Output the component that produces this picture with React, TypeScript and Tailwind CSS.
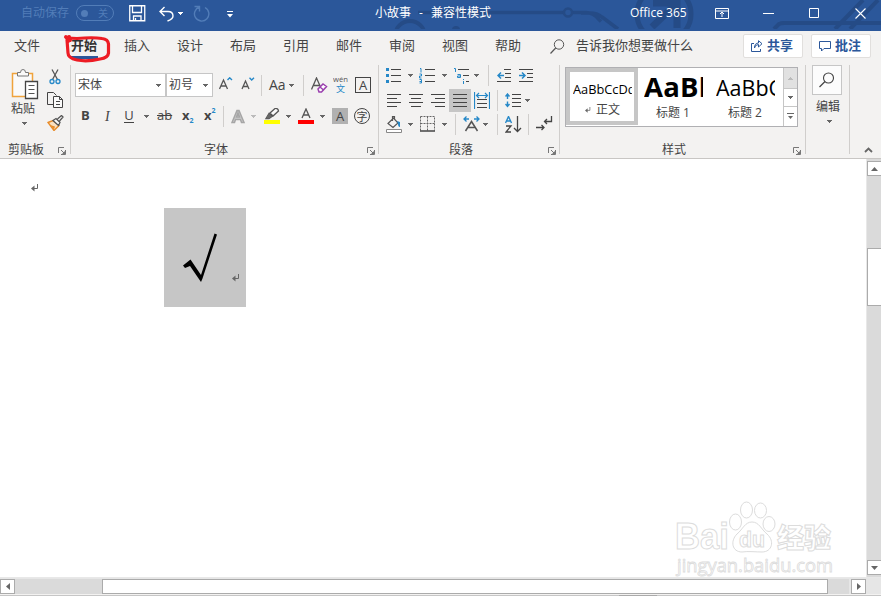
import React from "react";

type IconProps = { w: number; h: number; className?: string; children: React.ReactNode };

function Icon({ w, h, className = "", children }: IconProps) {
  return (
    <svg width={w} height={h} viewBox={`0 0 ${w} ${h}`} fill="none" className={`block shrink-0 ${className}`}>
      {children}
    </svg>
  );
}

function Caret({ className = "", color = "#666" }: { className?: string; color?: string }) {
  return (
    <Icon w={5} h={3} className={className}>
      <path d="M0 0h5v1H4v1H3v1H2V2H1V1H0z" fill={color} />
    </Icon>
  );
}

function Sep({ className = "" }: { className?: string }) {
  return <div className={`h-[21px] w-px shrink-0 bg-[#d0cecc] ${className}`} />;
}

function GroupSep() {
  return <div className="mt-px h-[89px] w-px shrink-0 bg-[#d0cecc]" />;
}

function Launcher({ className = "" }: { className?: string }) {
  return (
    <Icon w={8} h={8} className={className}>
      <path d="M.5 6V.5H6M3 3l3.500 3.500M7.500 3v4.500H3" stroke="#777" />
      <path d="M7 4v3H4z" fill="#777" />
    </Icon>
  );
}

function Lines({ rows, className = "" }: { rows: number[][]; className?: string }) {
  return (
    <Icon w={15} h={14} className={className}>
      {rows.map(([y, x, w]) => (
        <path key={y} d={`M${x} ${y + 0.5}h${w}`} stroke="#444" />
      ))}
    </Icon>
  );
}

function ReturnMark({ className = "" }: { className?: string }) {
  return (
    <Icon w={8} h={8} className={className}>
      <path d="M6.500 0v4.500H2" stroke="#666" />
      <path d="M0 4.500L3.500 1.500v6z" fill="#666" />
    </Icon>
  );
}

function TitleBar() {
  return (
    <header className="relative h-[31px] shrink-0 bg-[#2b579a] text-white">
      <svg className="absolute inset-0" width="881" height="31" fill="none" stroke="#254b86">
        <path d="M418 12.500h145M573 12.500h13q7 0 13 7l2 2M581 13h9q7 0 12 4l16 12" strokeWidth="3.500" />
        <circle cx="568" cy="12.500" r="4" strokeWidth="2.500" />
        <circle cx="410" cy="36" r="15" strokeWidth="4" />
        <circle cx="456" cy="30" r="4" fill="#254b86" stroke="none" />
        <circle cx="664" cy="14" r="27" strokeWidth="5" />
        <path d="M652 27l24-23M653 3h24v25" strokeWidth="7" />
        <path d="M774 29l5-5q2-1 5-1h97M835 29l28-29M850 29l28-29" strokeWidth="4" />
        <path d="M0 30h881" stroke="#2b579a" strokeWidth="2" />
      </svg>
      <div className="relative flex h-[26px] items-center">
        <span className="ml-[21px] w-12 shrink-0 text-[12px] whitespace-nowrap text-[#527db8]">自动保存</span>
        <div className="ml-[7px] flex h-4 w-[38px] shrink-0 items-center rounded-full border border-[#527db8] text-[#527db8]">
          <span className="ml-1 size-[7px] rounded-full bg-[#527db8]" />
          <span className="ml-[10px] text-[10px] leading-none">关</span>
        </div>
        <Icon w={17} h={17} className="ml-[15px]">
          <path d="M.75.75h15v15H.75zM3.500 1v6.500h9V1M4.500 16v-5h7.500v5M6.500 13v3" stroke="white" strokeWidth="1.300" />
        </Icon>
        <Icon w={16} h={16} className="ml-[13px] translate-y-px">
          <path d="M5.500 1L1 5.500 5.500 10M1.500 5.500H9q5 0 5 4.500 0 3-5.500 5" stroke="white" strokeWidth="1.400" />
        </Icon>
        <Caret className="ml-[3px]" color="white" />
        <Icon w={17} h={17} className="ml-[10px]">
          <path d="M1.500 1.500h5v5M6.500 2A7.200 7.200 0 1 0 12 2.500" stroke="#527db8" strokeWidth="1.400" />
        </Icon>
        <Icon w={6} h={7} className="ml-[17px] translate-y-px">
          <path d="M0 .5h6" stroke="white" />
          <path d="M0 3h6L3 6.500z" fill="white" />
        </Icon>
        <span className="ml-[142px] w-[130px] shrink-0 text-[12px] whitespace-nowrap">
          小故事<span className="mx-2">-</span>兼容性模式
        </span>
        <span className="ml-[125px] w-[62px] shrink-0 text-[12px] whitespace-nowrap">Office 365</span>
        <Icon w={14} h={11} className="ml-[23px]">
          <path d="M.5.500h13v10H.5zM.5 3h13M7 9V4M5 6l2-2 2 2" stroke="white" />
        </Icon>
        <Icon w={11} h={11} className="ml-[34px]">
          <path d="M0 5.500h11" stroke="white" />
        </Icon>
        <Icon w={10} h={10} className="ml-[35px]">
          <path d="M.5.500h9v9h-9z" stroke="white" />
        </Icon>
        <Icon w={11} h={11} className="ml-[36px]">
          <path d="M.5.500l10 10M10.500.500l-10 10" stroke="white" strokeWidth="1.100" />
        </Icon>
      </div>
    </header>
  );
}

const TABS = ["插入", "设计", "布局", "引用", "邮件", "审阅", "视图", "帮助"];

function TabBar() {
  return (
    <nav className="flex h-[33px] shrink-0 items-center text-[13px] leading-[18px] whitespace-nowrap text-[#444]">
      <span className="ml-[14px] w-[26px] -translate-y-[3px]">文件</span>
      <div className="relative ml-[31px] w-[26px] text-center font-bold">
        <span className="block -translate-y-[3px] text-[#333]">开始</span>
        <div className="absolute top-[17px] left-0 h-[3px] w-[27px] bg-[#2b579a]" />
        <svg className="absolute -top-[6px] -left-[8px] z-10" width="50" height="32" fill="none" stroke="#ed1c24" strokeLinecap="round" strokeLinejoin="round">
          <path d="M4 5L14 5.500Q30 4 39 5.500Q45 6 45.500 11V20Q45 25 37 26Q24 29 14 27Q5 25 5 20L4 7" strokeWidth="3.200" />
          <path d="M3 4l4 3M5 8l1-4" strokeWidth="4" />
        </svg>
      </div>
      <div className="ml-[27px] flex -translate-y-[3px] gap-[27px]">
        {TABS.map((t) => (
          <span key={t} className="w-[26px]">{t}</span>
        ))}
      </div>
      <Icon w={15} h={15} className="ml-[29px] -translate-y-px">
        <circle cx="9" cy="5.500" r="4.700" stroke="#555" />
        <path d="M5.700 9L.5 14.500" stroke="#555" strokeWidth="1.200" />
      </Icon>
      <span className="ml-[11px] w-[117px] -translate-y-[3px]">告诉我你想要做什么</span>
      <button className="ml-[50px] flex h-6 w-[60px] -translate-y-[2px] items-center rounded-[2px] border border-[#e1dfdd] bg-white pl-[7px] font-bold text-[#2b579a]">
        <Icon w={12} h={12}>
          <path d="M3 3.500H.5v8h9V9M3.500 8Q4 4.500 7.500 4.500V7L11 3.700 7.500.700V3Q3.500 3 3.500 8z" stroke="#2b579a" />
        </Icon>
        <span className="ml-1 -translate-y-px">共享</span>
      </button>
      <button className="ml-2 flex h-6 w-[60px] -translate-y-[2px] items-center rounded-[2px] border border-[#e1dfdd] bg-white pl-[7px] font-bold text-[#2b579a]">
        <Icon w={12} h={12}>
          <path d="M.5 1.500h11v7H5l-2.500 2.500V8.500h-2z" stroke="#2b579a" />
        </Icon>
        <span className="ml-1 -translate-y-px">批注</span>
      </button>
    </nav>
  );
}

function ClipboardGroup() {
  return (
    <section className="flex h-[94px] w-[70px] shrink-0 flex-col">
      <div className="flex h-[77px]">
        <div className="w-[40px] pt-[5px]">
          <Icon w={28} h={31} className="ml-[11px]">
            <path d="M1.500 4.500h20v23h-20z" fill="#fafafa" stroke="#f0a33c" strokeWidth="1.500" />
            <path d="M6.500 7V3.500h3Q9.500.500 12 .500t2.500 3h3V7z" fill="#fafafa" stroke="#777" />
            <path d="M14.500 12.500h12v17h-12z" fill="white" stroke="#444" strokeWidth="1.300" />
            <path d="M17.500 16.500h6M17.500 20.500h6M17.500 24.500h6" stroke="#555" />
          </Icon>
          <span className="ml-[11px] block h-[17px] text-[12px] leading-[17px] whitespace-nowrap">粘贴</span>
          <Caret className="mt-[5px] ml-[22px]" />
        </div>
        <div className="ml-[7px] flex flex-col pt-[5px]">
          <Icon w={16} h={16}>
            <path d="M5 .5l5.500 10M11 .5L5.500 10.500" stroke="#555" strokeWidth="1.300" />
            <circle cx="5" cy="12.500" r="2" stroke="#2588c8" strokeWidth="1.300" />
            <circle cx="11" cy="12.500" r="2" stroke="#2588c8" strokeWidth="1.300" />
          </Icon>
          <Icon w={17} h={17} className="mt-[7px]">
            <path d="M6 12.500H.5v-12h6l3 3" stroke="#444" />
            <path d="M6.500 4.500h6l3 3v8h-9zM12.500 4.500v3h3M9 9.500h4M9 12.500h4" fill="#fafafa" stroke="#444" />
          </Icon>
          <Icon w={17} h={16} className="mt-[6px]">
            <path d="M1 7.500l5-2 6 5-5 5z" fill="#fae0bf" stroke="#e88b28" strokeWidth="1.400" />
            <path d="M3 10l5 1.500-1 3z" fill="#e88b28" />
            <path d="M6 5.500l3-2 4 4-1.500 3zM10.500 4L14.500.500 16 2l-3.500 4" fill="#fafafa" stroke="#555" strokeWidth="1.300" />
          </Icon>
        </div>
      </div>
      <div className="flex items-center">
        <span className="ml-2 w-9 text-[12px] leading-[17px] whitespace-nowrap">剪贴板</span>
        <Launcher className="ml-[14px] translate-y-px" />
      </div>
    </section>
  );
}

function FontGroup() {
  return (
    <section className="flex h-[94px] w-[307px] shrink-0 flex-col">
      <div className="mt-[9px] flex h-6 items-center">
        <div className="ml-1 flex h-6 w-[91px] items-center border border-[#c6c6c6] bg-white">
          <span className="ml-[2px] w-6 text-[12px] leading-[18px] whitespace-nowrap">宋体</span>
          <Caret className="ml-[54px]" />
        </div>
        <div className="flex h-6 w-[47px] items-center border border-[#c6c6c6] bg-white">
          <span className="ml-[2px] w-6 text-[12px] leading-[18px] whitespace-nowrap">初号</span>
          <Caret className="ml-[10px]" />
        </div>
        <Icon w={14} h={14} className="ml-[6px] -translate-y-px">
          <path d="M.5 12L4.500 3 8.500 12M2 9h5" stroke="#555" strokeWidth="1.300" />
          <path d="M8.500 3l2.200-2.200L13 3" stroke="#2588c8" strokeWidth="1.400" />
        </Icon>
        <Icon w={14} h={14} className="ml-2 -translate-y-px">
          <path d="M1 12l3.500-8L8 12M2.200 9.500h4.600" stroke="#555" strokeWidth="1.300" />
          <path d="M8.500.800L10.700 3 13 .800" stroke="#2588c8" strokeWidth="1.400" />
        </Icon>
        <Sep className="ml-[6px]" />
        <span className="ml-[7px] w-[18px] font-['Open_Sans'] text-[14px] leading-[18px]">Aa</span>
        <Caret className="ml-[2px]" />
        <Sep className="ml-[9px]" />
        <Icon w={17} h={17} className="ml-[7px]">
          <path d="M.5 12.500L5.500 1l4 9M2.500 8.500h6" stroke="#555" strokeWidth="1.300" />
          <path d="M7 12l5-5 3.500 2.500-5 5.500H8z" fill="white" stroke="#9a3fae" strokeWidth="1.500" />
          <path d="M9 10l3.500 3" stroke="#9a3fae" strokeWidth="1.500" />
        </Icon>
        <svg className="ml-[5px] block shrink-0" width="16" height="18" fontFamily="Open Sans, Noto Sans CJK SC, sans-serif">
          <text x="0" y="6" fontSize="8" textLength="15" lengthAdjust="spacingAndGlyphs" fill="#555">wén</text>
          <text x="3" y="16" fontSize="9" fill="#2588c8">文</text>
        </svg>
        <span className="ml-[6px] flex size-4 items-center justify-center border border-[#444] font-['Open_Sans'] text-[13px] leading-none">A</span>
      </div>
      <div className="mt-[7px] flex h-6 items-center">
        <span className="ml-[10px] w-[9px] font-['Open_Sans'] text-[13px] font-bold">B</span>
        <span className="ml-[15px] w-[7px] font-['Liberation_Serif'] text-[14px] italic">I</span>
        <span className="ml-[12px] w-[10px] border-b border-[#444] text-center font-['Open_Sans'] text-[13px] leading-[13px]">U</span>
        <Caret className="ml-[10px]" />
        <span className="ml-[8px] w-[15px] font-['Open_Sans'] text-[13px] line-through">ab</span>
        <span className="ml-[10px] flex w-[12px] items-center font-['Open_Sans'] text-[13px] font-bold">
          x<span className="translate-y-[5px] text-[7px] text-[#2588c8]">2</span>
        </span>
        <span className="ml-[10px] flex w-[12px] items-center font-['Open_Sans'] text-[13px] font-bold">
          x<span className="-translate-y-[5px] text-[7px] text-[#2588c8]">2</span>
        </span>
        <Sep className="ml-[7px]" />
        <Icon w={15} h={15} className="ml-[7px]">
          <path d="M1 13.500L6 1.500h2l5 12h-2.500L9.500 10.500H4.500l-1 3zM5.500 8h3L7 4z" fill="#ccc" stroke="#a6a6a6" strokeWidth="1.500" />
        </Icon>
        <Caret className="ml-[5px]" color="#bbb" />
        <Icon w={16} h={17} className="ml-2">
          <path d="M0 12h16v4H0z" fill="#ff0" />
          <path d="M2 10.500l3-5 3 3-3 2zM6 5l5-4.500Q14 0 14.500 3L9 8z" fill="#fafafa" stroke="#555" strokeWidth="1.300" />
          <path d="M2 10.500l3-5 3 3-3 2z" fill="#666" />
        </Icon>
        <Caret className="ml-[6px]" />
        <Icon w={16} h={17} className="ml-[7px]">
          <path d="M4 10L8 1l4 9M5.200 7h5.600" stroke="#555" strokeWidth="1.300" />
          <path d="M0 12h16v4H0z" fill="red" />
        </Icon>
        <Caret className="ml-[6px]" />
        <span className="ml-[7px] flex size-4 items-center justify-center bg-[#b1b1b1] font-['Open_Sans'] text-[13px] leading-none">A</span>
        <span className="ml-[6px] flex size-4 items-center justify-center rounded-full border border-[#444] text-[11px] leading-none">字</span>
      </div>
      <div className="mt-[13px] flex items-center">
        <span className="ml-[133px] w-6 text-[12px] leading-[17px] whitespace-nowrap">字体</span>
        <Launcher className="ml-[139px] translate-y-px" />
      </div>
    </section>
  );
}

function ParagraphGroup() {
  return (
    <section className="flex h-[94px] w-[180px] shrink-0 flex-col">
      <div className="flex h-[23px] items-center">
        <Icon w={16} h={16} className="ml-[7px]">
          <path d="M0 0h3v3H0zM0 6h3v3H0zM0 12h3v3H0z" fill="#2588c8" />
          <path d="M5 1.500h10M5 7.500h10M5 13.500h10" stroke="#444" />
        </Icon>
        <Caret className="ml-[6px]" />
        <Icon w={16} h={16} className="ml-[6px]">
          <path d="M1 .5h1v4M.5 6h2v2h-2v2h2M.5 11.500h2v3.500h-2M.5 13.500h2" stroke="#2588c8" />
          <path d="M6 1.500h10M6 7.500h10M6 13.500h10" stroke="#444" />
        </Icon>
        <Caret className="ml-[7px]" />
        <Icon w={16} h={16} className="ml-[7px]">
          <path d="M0 .5h1.500V4M3.500 6.500h3v3h-3V8h3M9.500 11v1M9.500 13v3" stroke="#2588c8" />
          <path d="M4 1.500h11M9 7.500h6M12 13.500h3" stroke="#444" />
        </Icon>
        <Caret className="ml-[4px]" />
        <Sep className="ml-[9px]" />
        <Icon w={15} h={14} className="ml-2">
          <path d="M7 .5h7M8 4.500h6M8 8.500h6M0 12.500h14" stroke="#444" />
          <path d="M7 6.500H1M4 3.500l-3 3 3 3" stroke="#2588c8" strokeWidth="1.500" />
        </Icon>
        <Icon w={15} h={14} className="ml-[7px]">
          <path d="M0 .5h14M8 4.500h6M8 8.500h6M0 12.500h14" stroke="#444" />
          <path d="M0 6.500h6M3 3.500l3 3-3 3" stroke="#2588c8" strokeWidth="1.500" />
        </Icon>
      </div>
      <div className="mt-[2px] flex h-[23px] items-center">
        <Lines className="ml-2" rows={[[0, 0, 14], [4, 0, 10], [8, 0, 14], [12, 0, 10]]} />
        <Lines className="ml-[7px]" rows={[[0, 0, 14], [4, 2, 10], [8, 0, 14], [12, 2, 10]]} />
        <Lines className="ml-[7px]" rows={[[0, 0, 14], [4, 4, 10], [8, 0, 14], [12, 4, 10]]} />
        <span className="ml-[3px] flex h-[23px] w-[22px] items-center justify-center bg-[#c6c6c6]">
          <Lines rows={[[0, 0, 14], [4, 0, 14], [8, 0, 14], [12, 0, 14]]} />
        </span>
        <Icon w={16} h={17} className="ml-[3px]">
          <path d="M.5 0v17M15.500 0v17M2 3.500h12M5 1L2.500 3.500 5 6M11 1l2.500 2.500L11 6" stroke="#2588c8" strokeWidth="1.200" />
          <path d="M3 7.500h10M3 11.500h10M3 15.500h10" stroke="#444" />
        </Icon>
        <Sep className="ml-[7px]" />
        <Icon w={16} h={15} className="ml-[7px]">
          <path d="M2.500 1v5M.5 3.500l2-2.500 2 2.500M2.500 8.500v5M.5 11l2 2.500 2-2.500" stroke="#2588c8" strokeWidth="1.400" />
          <path d="M7 1.500h9M7 5.500h9M7 9.500h9M7 13.500h9" stroke="#444" />
        </Icon>
        <Caret className="ml-1" />
      </div>
      <div className="flex h-6 items-center">
        <Icon w={16} h={17} className="ml-[7px]">
          <path d="M2 7.500L7.500 2l4.500 5-5 4.500zM6.500 5V.5h2v3" stroke="#555" strokeWidth="1.200" />
          <path d="M11 5l3 1v5q-2 0-2-3z" fill="#2588c8" />
          <path d="M.5 13.500h15v3H.5z" fill="white" stroke="#888" />
        </Icon>
        <Caret className="ml-[6px]" />
        <Icon w={16} h={16} className="ml-[7px]">
          <path d="M.5.500h14v14M.5.500v14M7.500.500v14M.5 7.500h14" stroke="#666" strokeDasharray="2 1" />
          <path d="M0 15h15" stroke="#444" strokeWidth="1.500" />
        </Icon>
        <Caret className="ml-[6px]" />
        <Sep className="ml-2" />
        <Icon w={17} h={16} className="ml-[7px]">
          <path d="M2.500 15L8.500 5.500l6 9.500M5 11.500h7" stroke="#555" strokeWidth="1.500" />
          <path d="M6 3H1M3.500.500L1 3l2.500 2.500M11 3h5M13.500.500L16 3l-2.500 2.500" stroke="#2588c8" strokeWidth="1.300" />
        </Icon>
        <Caret className="ml-[3px]" />
        <Sep className="ml-[9px]" />
        <Icon w={17} h={17} className="ml-[7px]">
          <path d="M.5 7L3.500.500l3 6.500M1.500 5h4" stroke="#2588c8" strokeWidth="1.400" />
          <path d="M1 10h5l-5 6h5M12.500 0v15M9 12l3.500 3.500L16 12" stroke="#444" strokeWidth="1.300" />
        </Icon>
        <Sep className="ml-[6px]" />
        <Icon w={17} h={16} className="ml-[7px]">
          <path d="M15.500 0v5.500H8.500M11 3L8.500 5.500 11 8M0 11.500h8M5.500 9L8 11.500 5.500 14" stroke="#444" strokeWidth="1.300" />
        </Icon>
      </div>
      <div className="mt-[5px] flex items-center">
        <span className="ml-[70px] w-6 text-[12px] leading-[17px] whitespace-nowrap">段落</span>
        <Launcher className="ml-[75px] translate-y-px" />
      </div>
    </section>
  );
}

function StylesGroup() {
  return (
    <section className="flex h-[94px] w-[245px] shrink-0 flex-col">
      <div className="mt-[3px] ml-[5px] flex h-[60px] w-[233px] border border-[#b0b0b3] bg-white">
        <div className="flex h-[57px] w-[72px] shrink-0 flex-col border-[4px] border-[#c6c6c6] bg-white">
          <span className="mt-[8px] ml-[3px] h-[20px] w-[59px] overflow-hidden font-['Open_Sans'] text-[12.800px] leading-[19px] whitespace-nowrap text-black">AaBbCcDd</span>
          <div className="mt-px flex items-center text-[12px] leading-[18px]">
            <ReturnMark className="ml-[14px] scale-75" />
            <span className="ml-1">正文</span>
          </div>
        </div>
        <div className="w-[72px] shrink-0 pt-[2px]">
          <span className="ml-[6px] block h-[34px] w-[59px] overflow-hidden font-['Open_Sans'] text-[27.500px] leading-[34px] font-bold tracking-[0.2px] whitespace-nowrap text-black">AaBb</span>
          <span className="ml-[18px] block text-[12px] leading-[18px]">标题 1</span>
        </div>
        <div className="w-[73px] shrink-0 pt-[2px]">
          <span className="ml-[6px] block h-[34px] w-[59px] overflow-hidden font-['Open_Sans'] text-[21.500px] leading-[36px] whitespace-nowrap text-black">AaBbC</span>
          <span className="ml-[18px] block text-[12px] leading-[18px]">标题 2</span>
        </div>
        <div className="flex h-[58px] w-[14px] flex-col border-l border-[#c6c6c6]">
          <span className="flex h-[20px] items-center justify-center bg-[#e1e1e1]"><Caret className="rotate-180" color="#bbb" /></span>
          <span className="flex h-[19px] items-center justify-center border-y border-[#c6c6c6]"><Caret /></span>
          <span className="flex h-[19px] items-center justify-center">
            <Icon w={7} h={7}>
              <path d="M0 .5h7" stroke="#666" />
              <path d="M1 3h5L3.500 6z" fill="#666" />
            </Icon>
          </span>
        </div>
      </div>
      <div className="mt-[14px] flex items-center">
        <span className="ml-[102px] w-6 text-[12px] leading-[17px] whitespace-nowrap">样式</span>
        <Launcher className="ml-[107px] translate-y-px" />
      </div>
    </section>
  );
}

function Ribbon() {
  return (
    <div className="flex h-[95px] shrink-0 border-b border-[#c8c6c4] text-[#444]">
      <ClipboardGroup />
      <GroupSep />
      <FontGroup />
      <GroupSep />
      <ParagraphGroup />
      <GroupSep />
      <StylesGroup />
      <GroupSep />
      <section className="flex w-[43px] shrink-0 flex-col pl-[6px]">
        <div className="mt-px flex h-[30px] w-[30px] items-center justify-center border border-[#c6c6c6] bg-[#fcfcfc]">
          <Icon w={16} h={16}>
            <circle cx="9.500" cy="6" r="5" stroke="#444" strokeWidth="1.100" />
            <path d="M6 9.500L.5 15" stroke="#444" strokeWidth="1.300" />
          </Icon>
        </div>
        <span className="mt-[3px] ml-[4px] text-[12px] leading-[17px]">编辑</span>
        <Caret className="mt-[5px] ml-[15px]" />
      </section>
      <GroupSep />
      <Icon w={9} h={6} className="mt-[83px] ml-[14px]">
        <path d="M1 5l3.500-3.500L8 5" stroke="#666" strokeWidth="1.800" />
      </Icon>
    </div>
  );
}

function Watermark() {
  return (
    <svg className="absolute top-[336px] left-[670px]" width="170" height="82" fill="white" stroke="#dcdcdc">
      <text x="5" y="54" fontFamily="Liberation Sans" fontWeight="bold" fontSize="36" textLength="54" lengthAdjust="spacingAndGlyphs">Bai</text>
      <path d="M82 29c7 0 9 7 15 12 8 7 5 18-5 18-6 0-14-1-20 0-10 0-12-11-5-18 6-5 8-12 15-12z" transform="translate(0 -2)" />
      <ellipse cx="65.500" cy="27" rx="6" ry="8" />
      <ellipse cx="76.500" cy="15" rx="6" ry="8" />
      <ellipse cx="90.500" cy="15.500" rx="6" ry="7.500" />
      <ellipse cx="99" cy="29" rx="6" ry="7.500" />
      <text x="69" y="52" fontFamily="Liberation Sans" fontWeight="bold" fontSize="22" textLength="26" lengthAdjust="spacingAndGlyphs">du</text>
      <text x="107" y="53" fontFamily="Noto Sans CJK SC" fontWeight="900" fontSize="27">经验</text>
      <text x="7" y="77" fontFamily="Open Sans" fontSize="18" strokeWidth="0.800" textLength="156" lengthAdjust="spacingAndGlyphs">jingyan.baidu.com</text>
    </svg>
  );
}

function DocumentArea() {
  return (
    <main className="flex h-[418px] shrink-0">
      <div className="relative w-[866px] bg-white pt-[25px]">
        <ReturnMark className="ml-[31px]" />
        <div className="mt-4 ml-[164px] flex h-[99px] w-[82px] bg-[#c6c6c6]">
          <Icon w={36} h={52} className="mt-[24px] ml-[18px]">
            <path d="M1 33.500L8.500 27.500 19 43 32.500 1.500l2.500 1L20.500 46.500 19 50 8 34 3 36z" fill="black" />
          </Icon>
          <ReturnMark className="mt-[66px] ml-[14px]" />
        </div>
        <Watermark />
      </div>
      <div className="flex w-[15px] flex-col border-l border-[#e8e8e8] bg-[#dadada]">
        <div className="mt-[2px] flex h-[15px] w-[15px] shrink-0 items-center justify-center border border-[#ababab] bg-white">
          <Icon w={7} h={4}><path d="M3.500 0L7 4H0z" fill="#666" /></Icon>
        </div>
        <div className="mt-[72px] h-[58px] w-[15px] shrink-0 border border-[#ababab] bg-white" />
        <div className="mt-auto mb-[2px] flex h-[15px] w-[15px] shrink-0 items-center justify-center border border-[#ababab] bg-white">
          <Icon w={7} h={4}><path d="M0 0h7L3.500 4z" fill="#666" /></Icon>
        </div>
      </div>
    </main>
  );
}

export default function App() {
  return (
    <div className="flex h-[596px] w-[881px] flex-col overflow-hidden bg-[#f3f2f1] font-['Open_Sans','Noto_Sans_CJK_SC',sans-serif]">
      <TitleBar />
      <TabBar />
      <Ribbon />
      <DocumentArea />
      <div className="flex h-[17px] shrink-0 items-center border-t border-[#e8e8e8] bg-[#e6e6e6]">
        <div className="flex h-[15px] w-[15px] items-center justify-center border border-[#ababab] bg-white">
          <Icon w={4} h={7}><path d="M4 0v7L0 3.500z" fill="#666" /></Icon>
        </div>
        <div className="h-[15px] w-[87px] bg-[#dadada]" />
        <div className="h-[15px] w-[726px] border border-[#ababab] bg-white" />
        <div className="h-[15px] w-[21px] bg-[#dadada]" />
        <div className="ml-[2px] flex h-[15px] w-[15px] items-center justify-center border border-[#ababab] bg-white">
          <Icon w={4} h={7}><path d="M0 0v7l4-3.500z" fill="#666" /></Icon>
        </div>
      </div>
      <div className="h-[2px] shrink-0 border-b border-[#c6c6c6]">
        <div className="mt-px ml-[619px] h-px w-[38px] bg-[#aaa]" />
      </div>
    </div>
  );
}
